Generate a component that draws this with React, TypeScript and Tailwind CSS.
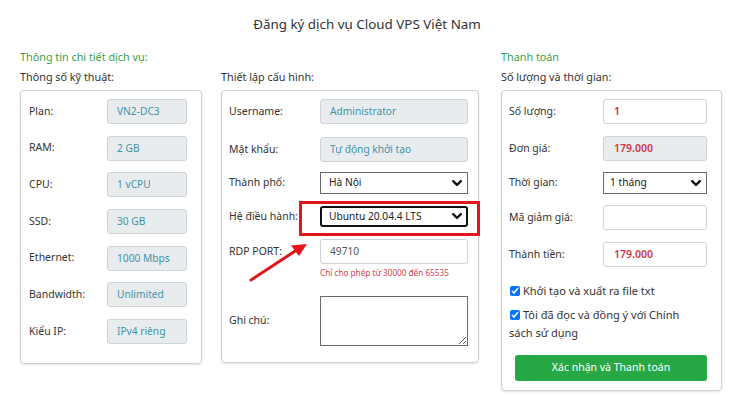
import React from "react";

const Chevron = () => (
  <svg width="10" height="7" viewBox="0 0 10 7" className="shrink-0">
    <polyline points="1.2,1.2 5,5 8.8,1.2" fill="none" stroke="#111" strokeWidth="2.4" strokeLinecap="round" strokeLinejoin="round" />
  </svg>
);

function GrayInput({ value, w }: { value: string; w: string }) {
  return (
    <div className={`${w} h-[25px] shrink-0 rounded-[3px] border border-[#ced4da] bg-[#e9ecef] pl-[9px] flex items-center text-[10.2px] text-[#3f93a6]`}>
      {value}
    </div>
  );
}

function LeftRow({ label, value }: { label: string; value: string }) {
  return (
    <div className="flex items-center h-[25px]">
      <div className="flex-1 text-[10.5px] text-[#333]">{label}</div>
      <GrayInput value={value} w="w-[80px]" />
    </div>
  );
}

export default function App() {
  const leftRows: [string, string][] = [
    ["Plan:", "VN2-DC3"],
    ["RAM:", "2 GB"],
    ["CPU:", "1 vCPU"],
    ["SSD:", "30 GB"],
    ["Ethernet:", "1000 Mbps"],
    ["Bandwidth:", "Unlimited"],
    ["Kiểu IP:", "IPv4 riêng"],
  ];

  return (
    <div className="relative w-[734px] h-[396px] overflow-hidden bg-white text-[#333] font-['Noto_Sans',sans-serif]">
      <div className="h-[48px] pt-[15px] text-center text-[13.4px] leading-[18px] text-[#333]">
        Đăng ký dịch vụ Cloud VPS Việt Nam
      </div>

      <div className="flex items-start pl-[20px]">
        {/* Left column */}
        <div className="w-[182px] shrink-0">
          <div className="h-[18px] leading-[18px] text-[10.8px] text-[#3a9f4d]">Thông tin chi tiết dịch vụ:</div>
          <div className="mt-[2px] h-[18px] leading-[18px] text-[10.8px] text-[#333]">Thông số kỹ thuật:</div>
          <div className="mt-[4px] rounded-[4px] border border-[#cfcfcf] shadow-[0_1px_2px_rgba(0,0,0,0.12)] pt-[8px] pb-[19px] pl-[8px] pr-[14px] flex flex-col gap-[11.7px]">
            {leftRows.map(([l, v]) => (
              <LeftRow key={l} label={l} value={v} />
            ))}
          </div>
        </div>

        {/* Middle column */}
        <div className="ml-[19px] w-[258px] shrink-0">
          <div className="h-[18px]" />
          <div className="mt-[2px] h-[18px] leading-[18px] text-[10.8px] text-[#333]">Thiết lập cấu hình:</div>
          <div className="mt-[4px] rounded-[4px] border border-[#cfcfcf] shadow-[0_1px_2px_rgba(0,0,0,0.12)] pt-[8px] pb-[16px] pl-[7px] pr-[10px] flex flex-col">
            <div className="flex items-center h-[25px]">
              <div className="flex-1 text-[10.5px]">Username:</div>
              <GrayInput value="Administrator" w="w-[148px]" />
            </div>
            <div className="mt-[13px] flex items-center h-[25px]">
              <div className="flex-1 text-[10.5px]">Mật khẩu:</div>
              <GrayInput value="Tự động khởi tạo" w="w-[148px]" />
            </div>
            <div className="mt-[10px] flex items-center h-[22px]">
              <div className="flex-1 text-[10.5px]">Thành phố:</div>
              <div className="w-[148px] h-[22px] border border-[#6b6b6b] bg-white pl-[8px] pr-[5px] flex items-center justify-between text-[10.2px] text-[#222]">
                <span>Hà Nội</span>
                <Chevron />
              </div>
            </div>
            <div className="mt-[12px] flex items-center h-[21px]">
              <div className="flex-1 text-[10.5px]">Hệ điều hành:</div>
              <div className="w-[148px] h-[21px] border-2 border-[#111] rounded-[3px] bg-white pl-[7px] pr-[4px] flex items-center justify-between text-[10.2px] text-[#222]">
                <span>Ubuntu 20.04.4 LTS</span>
                <Chevron />
              </div>
            </div>
            <div className="mt-[12px] flex items-center h-[25px]">
              <div className="flex-1 text-[10.5px]">RDP PORT:</div>
              <div className="w-[148px] h-[25px] rounded-[3px] border border-[#ced4da] bg-white pl-[9px] flex items-center text-[10.2px] text-[#555]">
                49710
              </div>
            </div>
            <div className="mt-[2px] h-[14px] leading-[14px] pl-[91px] text-[8.2px] text-[#d9434f] whitespace-nowrap">
              Chỉ cho phép từ 30000 đến 65535
            </div>
            <div className="mt-[16px] flex items-center h-[50px]">
              <div className="flex-1 text-[10.5px]">Ghi chú:</div>
              <textarea
                readOnly
                className="w-[148px] h-[50px] border border-[#6b6b6b] bg-white outline-none"
              />
            </div>
          </div>
        </div>

        {/* Right column */}
        <div className="ml-[22px] w-[221px] shrink-0">
          <div className="h-[18px] leading-[18px] text-[10.8px] text-[#3a9f4d]">Thanh toán</div>
          <div className="mt-[2px] h-[18px] leading-[18px] text-[10.8px] text-[#333]">Số lượng và thời gian:</div>
          <div className="mt-[4px] rounded-[4px] border border-[#cfcfcf] shadow-[0_1px_2px_rgba(0,0,0,0.12)] pt-[8px] pb-[9px] pl-[7px] pr-[14px] flex flex-col">
            <div className="flex items-center h-[25px]">
              <div className="flex-1 text-[10.5px]">Số lượng:</div>
              <div className="w-[104px] h-[25px] rounded-[3px] border border-[#ced4da] bg-white pl-[10px] flex items-center text-[10.5px] font-semibold text-[#c7254e]">
                1
              </div>
            </div>
            <div className="mt-[12px] flex items-center h-[25px]">
              <div className="flex-1 text-[10.5px]">Đơn giá:</div>
              <div className="w-[104px] h-[25px] rounded-[3px] border border-[#ced4da] bg-[#e9ecef] pl-[10px] flex items-center text-[10.5px] font-semibold text-[#d23547]">
                179.000
              </div>
            </div>
            <div className="mt-[11px] flex items-center h-[22px]">
              <div className="flex-1 text-[10.5px]">Thời gian:</div>
              <div className="w-[104px] h-[22px] border border-[#6b6b6b] bg-white pl-[6px] pr-[5px] flex items-center justify-between text-[10.2px] text-[#222]">
                <span>1 tháng</span>
                <Chevron />
              </div>
            </div>
            <div className="mt-[11px] flex items-center h-[25px]">
              <div className="flex-1 text-[10.5px]">Mã giảm giá:</div>
              <div className="w-[104px] h-[25px] rounded-[3px] border border-[#ced4da] bg-white" />
            </div>
            <div className="mt-[12px] flex items-center h-[25px]">
              <div className="flex-1 text-[10.5px]">Thành tiền:</div>
              <div className="w-[104px] h-[25px] rounded-[3px] border border-[#ced4da] bg-white pl-[10px] flex items-center text-[10.5px] font-semibold text-[#d23547]">
                179.000
              </div>
            </div>
            <label className="mt-[15px] flex items-center h-[18px] text-[11px] text-[#333]">
              <input type="checkbox" checked readOnly className="m-0 mr-[3px] ml-[1px] w-[10px] h-[10px] accent-[#0075ff]" />
              Khởi tạo và xuất ra file txt
            </label>
            <div className="mt-[6px] text-[11px] leading-[18px] text-[#333]">
              <input type="checkbox" checked readOnly className="m-0 mr-[3px] ml-[1px] w-[10px] h-[10px] align-[-1px] accent-[#0075ff]" />
              Tôi đã đọc và đồng ý với Chính
              <br />
              sách sử dụng
            </div>
            <button className="mt-[13px] ml-[6px] h-[26px] w-[192px] rounded-[3px] bg-[#28a745] text-white text-[10.5px] flex items-center justify-center">
              Xác nhận và Thanh toán
            </button>
          </div>
        </div>
      </div>

      {/* Annotation overlays */}
      <div className="absolute left-[299px] top-[201px] w-[181px] h-[35px] border-[3px] border-[#e3141c] pointer-events-none" />
      <svg className="absolute left-0 top-0 pointer-events-none" width="734" height="396" viewBox="0 0 734 396">
        <line x1="251" y1="280" x2="296" y2="250.5" stroke="#e3141c" strokeWidth="3" strokeLinecap="round" />
        <polygon points="307,244 291,245.5 299,256" fill="#e3141c" />
      </svg>
    </div>
  );
}
